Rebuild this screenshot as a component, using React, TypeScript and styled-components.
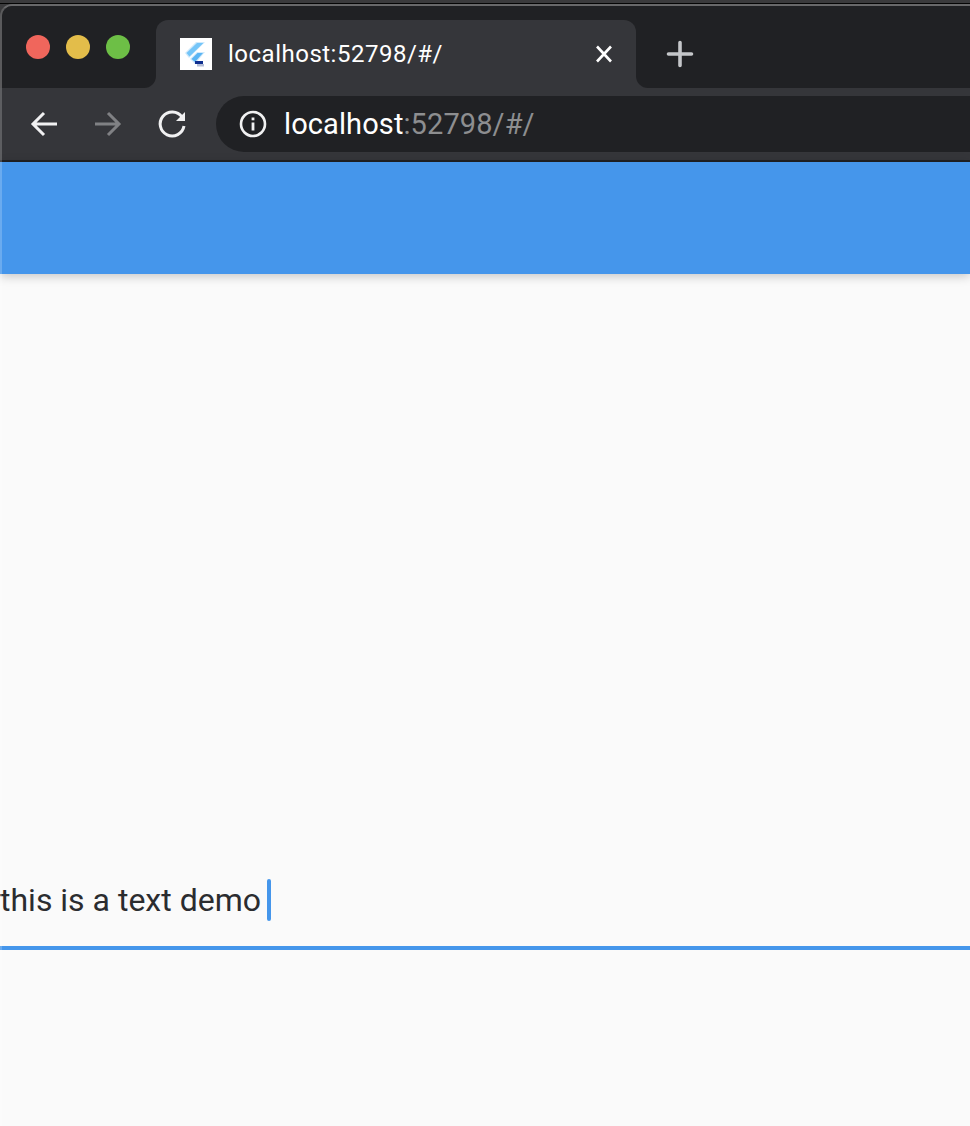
import React from "react";
import styled, { createGlobalStyle } from "styled-components";

const GlobalStyle = createGlobalStyle`
  html, body {
    margin: 0;
    padding: 0;
    background: #fafafa;
  }
  body {
    font-family: Roboto, "Liberation Sans", sans-serif;
  }
`;

const Page = styled.div`
  position: relative;
  width: 970px;
  height: 1126px;
  display: flex;
  flex-direction: column;
  overflow: hidden;
  background: #fafafa;

  /* light rim of the window, runs over everything below the tab strip */
  &::after {
    content: "";
    position: absolute;
    left: 0;
    top: 88px;
    bottom: 0;
    width: 2px;
    background: rgba(255, 255, 255, 0.2);
  }
`;

const WindowTop = styled.div`
  height: 3px;
  background: #3a3a3c;
  border-bottom: 1px solid #050505;
  flex: none;
`;

const BrowserChrome = styled.div`
  flex: none;
  background: #3a3a3c;
`;

const TabStrip = styled.div`
  display: flex;
  height: 84px;
  box-sizing: border-box;
  background: #35363a;
  border-top: 2px solid #68686a;
  border-left: 2px solid #5a5a5c;
  border-top-left-radius: 12px;
  overflow: hidden;
`;

const WindowControls = styled.div`
  width: 154px;
  flex: none;
  display: flex;
  gap: 16px;
  padding: 29px 0 0 24px;
  box-sizing: border-box;
  background: #202124;
  border-bottom-right-radius: 12px;
`;

const Light = styled.span<{ $color: string }>`
  width: 24px;
  height: 24px;
  border-radius: 50%;
  background: ${(p) => p.$color};
`;

const TabSlot = styled.div`
  flex: none;
  background: #202124;
  padding-top: 14px;
`;

const Tab = styled.div`
  width: 480px;
  height: 68px;
  box-sizing: border-box;
  display: flex;
  align-items: flex-start;
  padding: 18px 20px 0 24px;
  background: #35363a;
  border-radius: 12px 12px 0 0;
`;

const Favicon = styled.svg`
  width: 32px;
  height: 32px;
  flex: none;
  display: block;
`;

const TabTitle = styled.span`
  flex: 1;
  margin-left: 16px;
  font-size: 24px;
  line-height: 32px;
  letter-spacing: 0.5px;
  color: #ffffff;
`;

const TabClose = styled.svg`
  width: 24px;
  height: 24px;
  flex: none;
  margin-top: 4px;
`;

const StripRest = styled.div`
  flex: 1;
  padding: 34px 0 0 30px;
  box-sizing: border-box;
  background: #202124;
  border-bottom-left-radius: 12px;
`;

const NewTab = styled.svg`
  display: block;
  width: 28px;
  height: 28px;
`;

const Toolbar = styled.div`
  height: 72px;
  box-sizing: border-box;
  display: flex;
  align-items: center;
  padding-left: 24px;
  background: #35363a;
`;

const NavIcon = styled.svg`
  width: 40px;
  height: 40px;
  flex: none;
  margin-right: 24px;
`;

const AddressBar = styled.div`
  flex: 1;
  height: 56px;
  display: flex;
  align-items: center;
  padding-left: 23px;
  background: #202124;
  border-radius: 28px 0 0 28px;
`;

const InfoIcon = styled.svg`
  width: 28px;
  height: 28px;
  flex: none;
  margin-right: 17px;
`;

const Url = styled.span`
  font-size: 29px;
  letter-spacing: 0.1px;
  color: #8d8e90;
`;

const Host = styled.span`
  color: #ffffff;
`;

const ChromeEdge = styled.div`
  height: 2px;
  background: #202124;
`;

const AppBar = styled.header`
  flex: none;
  height: 112px;
  background: #4596eb;
  box-shadow: 0 2px 10px rgba(0, 0, 0, 0.22);
`;

const Body = styled.main`
  flex: 1;
  display: flex;
  flex-direction: column;
  padding-top: 605px;
`;

const Field = styled.div`
  height: 67px;
  display: flex;
  align-items: flex-start;
  border-bottom: 4px solid #4596eb;
`;

const FieldText = styled.span`
  font-size: 32px;
  line-height: 42px;
  color: #2b2c2f;
`;

const Caret = styled.span`
  width: 4px;
  height: 42px;
  margin-left: 6px;
  border-radius: 2px;
  background: #4596eb;
`;

const stroke = "#f1f1f2";

const App: React.FC = () => {
  return (
    <Page>
      <GlobalStyle />
      <WindowTop />
      <BrowserChrome>
        <TabStrip>
          <WindowControls>
            <Light $color="#f0665c" />
            <Light $color="#e3bd4a" />
            <Light $color="#6dbf46" />
          </WindowControls>
          <TabSlot>
            <Tab>
              <Favicon viewBox="0 0 32 32">
                <rect width="32" height="32" fill="#ffffff" />
                <path d="M25 4 H16 L5 15 L9 20 Z" fill="#cfe9fb" />
                <path d="M23.5 5 H17 L6.5 15 L9.5 18.5 Z" fill="#74c5f8" />
                <path d="M25 14 H17 L10 21 L15 26 Z" fill="#cfe9fb" />
                <path d="M23 15 H17.5 L11.5 21 L15 24 Z" fill="#5ab4f3" />
                <rect x="15" y="23" width="8" height="3" fill="#0f2f8f" />
                <rect x="17" y="26" width="7" height="2.5" fill="#b4bdd6" />
              </Favicon>
              <TabTitle>localhost:52798/#/</TabTitle>
              <TabClose viewBox="0 0 24 24">
                <path d="M5 4.5 L19 19.5 M19 4.5 L5 19.5" stroke="#ffffff" strokeWidth="2.6" fill="none" />
              </TabClose>
            </Tab>
          </TabSlot>
          <StripRest>
            <NewTab viewBox="0 0 28 28">
              <path d="M14 2.5 V25.5 M2.5 14 H25.5" stroke="#c4c6c9" strokeWidth="3.6" strokeLinecap="round" fill="none" />
            </NewTab>
          </StripRest>
        </TabStrip>
        <Toolbar>
          <NavIcon viewBox="0 0 40 40">
            <path d="M33 20 H10 M20 9 L9 20 L20 31" stroke={stroke} strokeWidth="3" fill="none" />
          </NavIcon>
          <NavIcon viewBox="0 0 40 40">
            <path d="M7 20 H30 M20 9 L31 20 L20 31" stroke="#808184" strokeWidth="3" fill="none" />
          </NavIcon>
          <NavIcon viewBox="0 0 40 40">
            <path d="M30 13 A12 12 0 1 0 32 22" stroke={stroke} strokeWidth="3" fill="none" />
            <path d="M33 8 V17 H24 Z" fill={stroke} />
          </NavIcon>
          <AddressBar>
            <InfoIcon viewBox="0 0 28 28">
              <circle cx="14" cy="14" r="12" stroke={stroke} strokeWidth="2.6" fill="none" />
              <rect x="12.6" y="12.5" width="2.8" height="8" fill={stroke} />
              <rect x="12.6" y="7.5" width="2.8" height="2.8" fill={stroke} />
            </InfoIcon>
            <Url>
              <Host>localhost</Host>:52798/#/
            </Url>
          </AddressBar>
        </Toolbar>
        <ChromeEdge />
      </BrowserChrome>
      <AppBar />
      <Body>
        <Field>
          <FieldText>this is a text demo</FieldText>
          <Caret />
        </Field>
      </Body>
    </Page>
  );
};

export default App;
